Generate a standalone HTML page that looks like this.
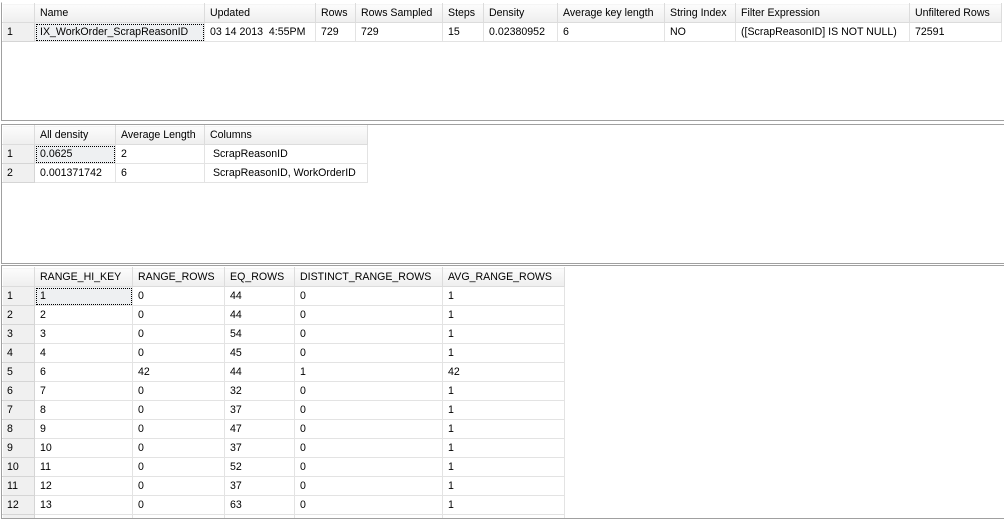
<!DOCTYPE html><html><head><style>
body{margin:0;width:1004px;height:520px;background:#fff;position:relative;overflow:hidden;font-family:"Liberation Sans",Arial,sans-serif;font-size:10.6px;color:#000}
.p{position:absolute;left:1px;right:0;border-left:1px solid #a0a0a0;border-top:1px solid #a0a0a0;border-bottom:1px solid #a0a0a0;background:#fff;overflow:hidden}
table{border-collapse:collapse;table-layout:fixed;position:absolute;left:0;top:0}
td{height:18px;padding:0 0 0 5px;border:1px solid #e3e3e3;white-space:nowrap;overflow:hidden;vertical-align:middle}
tr.h td{background:linear-gradient(#fcfcfc,#eeeeee);border-color:#fff #dcdcdc #dcdcdc #fff;height:18px}
td.r{background:#f0f0f0;border-color:#fff #d5d5d5 #d5d5d5 #fff;padding-left:4px}
td.s{outline:1px dotted #000;outline-offset:-2px;background:#eef0f2}
</style></head><body>
<div class="p" style="top:2px;height:117px;border-top-color:#fff">
<table style="width:1000px">
<colgroup><col style="width:32px"><col style="width:170px"><col style="width:111px"><col style="width:40px"><col style="width:87px"><col style="width:41px"><col style="width:74px"><col style="width:107px"><col style="width:71px"><col style="width:174px"><col style="width:92px"></colgroup>
<tr class="h"><td></td><td>Name</td><td>Updated</td><td>Rows</td><td>Rows Sampled</td><td>Steps</td><td>Density</td><td>Average key length</td><td>String Index</td><td>Filter Expression</td><td>Unfiltered Rows</td></tr>
<tr><td class="r">1</td><td class="s">IX_WorkOrder_ScrapReasonID</td><td>03 14 2013 &nbsp;4:55PM</td><td>729</td><td>729</td><td>15</td><td>0.02380952</td><td>6</td><td>NO</td><td>([ScrapReasonID] IS NOT NULL)</td><td>72591</td></tr>
</table></div>
<div class="p" style="top:124px;height:138px">
<table style="width:365px">
<colgroup><col style="width:32px"><col style="width:81px"><col style="width:89px"><col style="width:163px"></colgroup>
<tr class="h"><td></td><td>All density</td><td>Average Length</td><td>Columns</td></tr>
<tr><td class="r">1</td><td class="s">0.0625</td><td>2</td><td>&nbsp;ScrapReasonID</td></tr>
<tr><td class="r">2</td><td>0.001371742</td><td>6</td><td>&nbsp;ScrapReasonID, WorkOrderID</td></tr>
</table></div>
<div class="p" style="top:265px;height:252px">
<table style="width:562px;top:1px">
<colgroup><col style="width:32px"><col style="width:98px"><col style="width:92px"><col style="width:70px"><col style="width:148px"><col style="width:122px"></colgroup>
<tr class="h"><td></td><td>RANGE_HI_KEY</td><td>RANGE_ROWS</td><td>EQ_ROWS</td><td>DISTINCT_RANGE_ROWS</td><td>AVG_RANGE_ROWS</td></tr>
<tr><td class="r">1</td><td class="s">1</td><td>0</td><td>44</td><td>0</td><td>1</td></tr>
<tr><td class="r">2</td><td>2</td><td>0</td><td>44</td><td>0</td><td>1</td></tr>
<tr><td class="r">3</td><td>3</td><td>0</td><td>54</td><td>0</td><td>1</td></tr>
<tr><td class="r">4</td><td>4</td><td>0</td><td>45</td><td>0</td><td>1</td></tr>
<tr><td class="r">5</td><td>6</td><td>42</td><td>44</td><td>1</td><td>42</td></tr>
<tr><td class="r">6</td><td>7</td><td>0</td><td>32</td><td>0</td><td>1</td></tr>
<tr><td class="r">7</td><td>8</td><td>0</td><td>37</td><td>0</td><td>1</td></tr>
<tr><td class="r">8</td><td>9</td><td>0</td><td>47</td><td>0</td><td>1</td></tr>
<tr><td class="r">9</td><td>10</td><td>0</td><td>37</td><td>0</td><td>1</td></tr>
<tr><td class="r">10</td><td>11</td><td>0</td><td>52</td><td>0</td><td>1</td></tr>
<tr><td class="r">11</td><td>12</td><td>0</td><td>37</td><td>0</td><td>1</td></tr>
<tr><td class="r">12</td><td>13</td><td>0</td><td>63</td><td>0</td><td>1</td></tr>
<tr><td class="r"></td><td></td><td></td><td></td><td></td><td></td></tr>
</table></div>
</body></html>
